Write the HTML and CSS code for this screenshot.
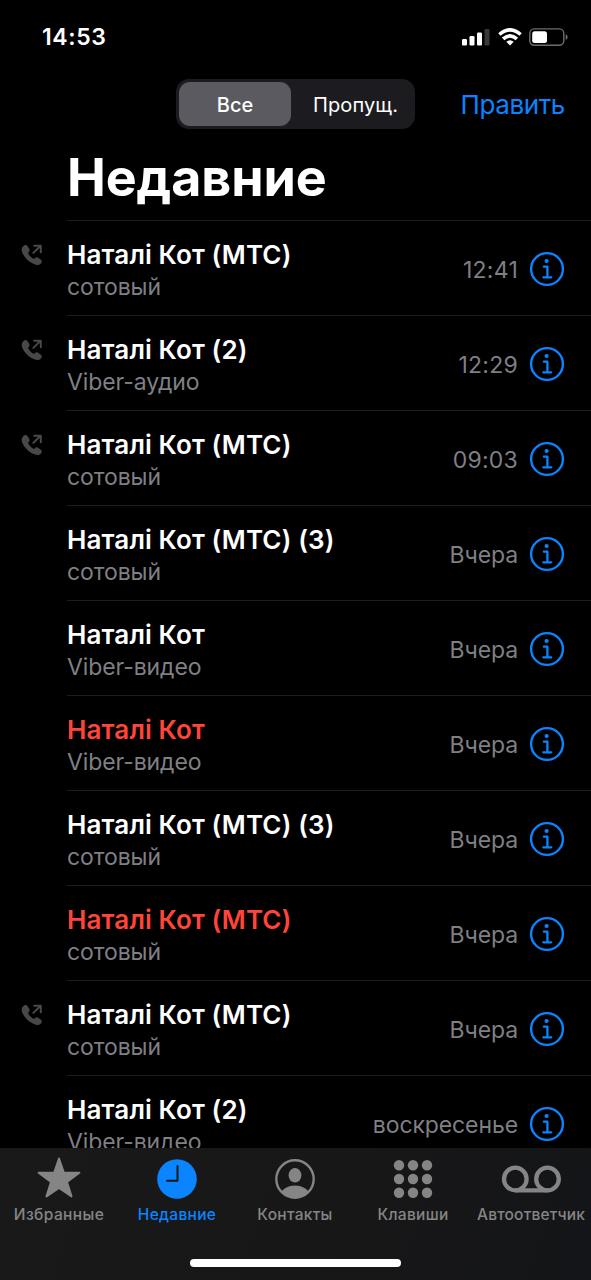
FILE: index.html
```html
<!DOCTYPE html>
<html lang="ru">
<head>
<meta charset="utf-8">
<title>Недавние</title>
<link rel="stylesheet" href="styles.css">
</head>
<body>
<svg class="sprite" aria-hidden="true">
  <symbol id="outgoing" viewBox="0 0 22 22">
    <path fill="currentColor" d="M2.200 2.200C3.600.7 5.300.5 6.400 2L8.200 4.800c.8 1.300.5 2.200-.5 3.100-.6.6-.7 1.100-.3 1.900 1 1.900 2.600 3.500 4.600 4.700.8.4 1.300.3 1.900-.3.9-1 1.900-1.200 3.100-.4l2.900 2c1.400 1.100 1.200 2.700-.2 4-1.500 1.500-3.900 1.600-6.900.3C7.800 18 3.500 13.600 1.400 9 .2 6.200.4 3.900 2.200 2.200z"/>
    <path fill="none" stroke="currentColor" stroke-width="2" stroke-linecap="round" stroke-linejoin="round" d="M12.300 8.900 19.600 1.800M13.200 1.700h6.600v6.600"/>
  </symbol>
  <symbol id="info" viewBox="0 0 36 36">
    <circle cx="18" cy="18" r="15.900" fill="none" stroke="currentColor" stroke-width="2.400"/>
    <circle cx="17.600" cy="10" r="2.100" fill="currentColor"/>
    <path fill="none" stroke="currentColor" stroke-width="2.300" stroke-linecap="round" stroke-linejoin="round" d="M14.900 15.700h3.500v10.600M14.300 26.300h7.900"/>
  </symbol>
</svg>
<div class="phone">
  <header class="status">
    <span class="clock">14:53</span>
    <div class="indicators">
      <svg width="28" height="18" viewBox="0 0 28 18"><g fill="#fff"><rect x="0" y="11" width="5" height="6.500" rx="1.300"/><rect x="7.500" y="8" width="5" height="9.500" rx="1.300"/><rect x="15" y="4.500" width="5" height="13" rx="1.300"/></g><rect x="22.500" y="1" width="5" height="16.500" rx="1.300" fill="#39393b"/></svg>
      <svg width="24" height="18" viewBox="0 0 24 18"><g fill="none" stroke="#fff" stroke-width="3.600"><path d="M1.400 6.500Q12-2.800 22.600 6.500"/><path d="M5.100 10.900Q12 4.700 18.900 10.900"/></g><path fill="#fff" d="M8.300 13.800Q12 10.600 15.700 13.800L12 17.600z"/></svg>
      <svg width="40" height="18" viewBox="0 0 40 18"><rect x=".8" y=".9" width="34" height="16.400" rx="4.500" fill="none" stroke="#6c6c6e" stroke-width="1.400"/><rect x="3.200" y="3.300" width="14.800" height="11.600" rx="2.500" fill="#fff"/><path d="M36.700 6.200q2 1 2 2.900t-2 2.900z" fill="#6c6c6e"/></svg>
    </div>
  </header>
  <nav class="toolbar">
    <div class="segments"><span class="segment segment-active">Все</span><span class="segment">Пропущ.</span></div>
    <span class="edit">Править</span>
  </nav>
  <h1 class="title">Недавние</h1>
  <main class="calls" id="calls"></main>
  <footer class="tabbar">
    <div class="tabs">
      <div class="tab"><svg width="60" height="46" viewBox="0 0 60 46"><path fill="currentColor" stroke="currentColor" stroke-width="2" stroke-linejoin="round" d="M30 4.500 34.800 18.500 50.400 18.700 38 28 42.500 42.400 30 33.900 17.500 42.400 22 28 9.600 18.700 25.200 18.500z"/></svg><span class="tab-label tab-label-wide">Избранные</span></div>
      <div class="tab tab-active"><svg width="60" height="46" viewBox="0 0 60 46"><circle cx="30" cy="25" r="19.800" fill="currentColor"/><path fill="none" stroke="#171718" stroke-width="2" stroke-linecap="round" stroke-linejoin="round" d="M30.500 12v14.800H20"/></svg><span class="tab-label">Недавние</span></div>
      <div class="tab"><svg width="60" height="46" viewBox="0 0 60 46"><clipPath id="disc"><circle cx="30" cy="25" r="19"/></clipPath><circle cx="30" cy="25" r="18.700" fill="none" stroke="currentColor" stroke-width="2.400"/><ellipse cx="30" cy="21.300" rx="6.400" ry="7.300" fill="currentColor"/><ellipse cx="30" cy="41.500" rx="14.500" ry="9.900" fill="currentColor" clip-path="url(#disc)"/></svg><span class="tab-label">Контакты</span></div>
      <div class="tab"><svg width="60" height="46" viewBox="0 0 60 46"><g fill="currentColor"><circle cx="16" cy="11.200" r="5.200"/><circle cx="30" cy="11.200" r="5.200"/><circle cx="44" cy="11.200" r="5.200"/><circle cx="16" cy="25" r="5.200"/><circle cx="30" cy="25" r="5.200"/><circle cx="44" cy="25" r="5.200"/><circle cx="16" cy="38.800" r="5.200"/><circle cx="30" cy="38.800" r="5.200"/><circle cx="44" cy="38.800" r="5.200"/></g></svg><span class="tab-label">Клавиши</span></div>
      <div class="tab"><svg width="60" height="46" viewBox="0 0 60 46"><g fill="none" stroke="currentColor" stroke-width="4.300"><circle cx="14.300" cy="25" r="11.300"/><circle cx="46.500" cy="25" r="11.300"/><path d="M14.300 36.300h32.200"/></g></svg><span class="tab-label tab-label-long">Автоответчик</span></div>
    </div>
    <div class="home"></div>
  </footer>
</div>
<script src="app.js"></script>
</body>
</html>
```
FILE: app.js
```js
const calls = [
  ["Наталі Кот (МТС)", "сотовый", "12:41", "out"],
  ["Наталі Кот (2)", "Viber-аудио", "12:29", "out"],
  ["Наталі Кот (МТС)", "сотовый", "09:03", "out"],
  ["Наталі Кот (МТС) (3)", "сотовый", "Вчера", ""],
  ["Наталі Кот", "Viber-видео", "Вчера", ""],
  ["Наталі Кот", "Viber-видео", "Вчера", "missed"],
  ["Наталі Кот (МТС) (3)", "сотовый", "Вчера", ""],
  ["Наталі Кот (МТС)", "сотовый", "Вчера", "missed"],
  ["Наталі Кот (МТС)", "сотовый", "Вчера", "out"],
  ["Наталі Кот (2)", "Viber-видео", "воскресенье", ""]
];
document.getElementById("calls").innerHTML = calls.map(([name, kind, time, state]) => `
  <article class="call">
    <div class="direction">${state === "out" ? '<svg class="out-icon"><use href="#outgoing"/></svg>' : ""}</div>
    <div class="entry">
      <div class="who">
        <span class="name ${state === "missed" ? "missed" : ""}">${name}</span>
        <span class="kind">${kind}</span>
      </div>
      <span class="time ${/\d/.test(time) ? "time-digits" : ""}">${time}</span>
      <svg class="info-icon"><use href="#info"/></svg>
    </div>
  </article>`).join("");
```
FILE: styles.css
```css
* { box-sizing: border-box; }
body { margin: 0; background: #000; color: #fff; font-family: Inter, "Liberation Sans", sans-serif; }
svg { display: block; flex: none; }
.sprite { display: none; }
.phone { display: flex; flex-direction: column; width: 591px; height: 1280px; overflow: hidden; background: #000; white-space: nowrap; }
.status { display: flex; justify-content: space-between; height: 79px; padding: 22px 22px 0 42px; }
.clock { font-size: 23px; font-weight: 600; line-height: 30px; letter-spacing: .6px; }
.indicators { display: flex; gap: 7.5px; padding-top: 5.5px; }
.toolbar { display: flex; justify-content: space-between; height: 50px; padding: 0 26px 0 176px; }
.segments { display: grid; grid-template-columns: 112px 1fr; width: 239px; height: 50px; padding: 3px; border-radius: 13px; background: #1c1c20; }
.segment { display: flex; align-items: center; justify-content: center; padding-top: 1px; border-radius: 11px; font-size: 20px; font-weight: 400; }
.segment-active { background: #5b5a60; font-weight: 500; }
.segment:last-child { padding-left: 8px; letter-spacing: .1px; }
.edit { color: #0a84ff; font-size: 26px; line-height: 51px; letter-spacing: -.4px; }
.title { height: 91px; margin: 0; padding: 17px 0 0 67px; font-size: 52px; font-weight: 700; line-height: 64px; letter-spacing: -.1px; }
.calls { height: 928px; overflow: hidden; }
.call { display: flex; height: 95px; }
.direction { width: 67px; padding: 23.5px 0 0 21px; }
.out-icon { width: 22px; height: 22px; color: #48484b; }
.entry { display: flex; flex: 1; align-items: flex-start; padding-right: 27px; border-top: 1px solid #1d1d1f; }
.who { display: flex; flex: 1; flex-direction: column; padding-top: 16px; }
.name { font-size: 26px; font-weight: 600; line-height: 35px; letter-spacing: .13px; }
.missed { color: #ff453a; }
.kind { color: #7f7f84; font-size: 23px; line-height: 30px; letter-spacing: -.1px; }
.time { padding-top: 33px; color: #7f7f84; font-size: 23px; line-height: 32px; letter-spacing: -.1px; }
.time-digits { margin-right: 1px; letter-spacing: .25px; }
.info-icon { width: 36px; height: 36px; margin: 29.5px -1px 0 11px; color: #0a84ff; }
.time-digits + .info-icon { margin-left: 10px; }
.tabbar { height: 132px; flex: none; background: linear-gradient(105deg, #19191a 0%, #171718 60%, #141518 100%); }
.tabs { display: grid; grid-template-columns: repeat(5, 1fr); width: 590px; height: 115px; padding-top: 6px; }
.tab { display: flex; flex-direction: column; align-items: center; color: #858585; font-size: 15.5px; font-weight: 500; line-height: 24px; }
.tab-label { margin-top: 3px; letter-spacing: .3px; }
.tab-label-wide { letter-spacing: .4px; }
.tab-label-long { letter-spacing: .2px; }
.tab-active { color: #0a84ff; }
.home { width: 211px; height: 8px; margin: -4px auto 0; border-radius: 4px; background: #fff; }
```
